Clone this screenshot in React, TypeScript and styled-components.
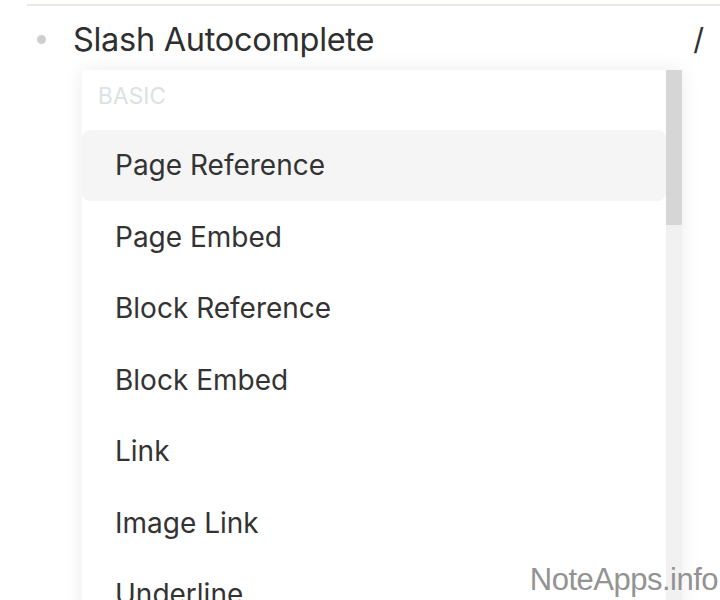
import React from "react";
import styled, { createGlobalStyle } from "styled-components";

const Global = createGlobalStyle`
  html, body { margin: 0; padding: 0; background: #ffffff; }
  body { width: 720px; height: 600px; overflow: hidden; font-family: Inter, "Noto Sans", sans-serif; }
`;

const Page = styled.div`
  position: relative;
  width: 720px;
  height: 600px;
  overflow: hidden;
  padding-top: 4px;
  box-sizing: border-box;
`;

const Divider = styled.div`
  margin-left: 27px;
  height: 2px;
  background: #e9e9e4;
`;

const BlockRow = styled.div`
  display: flex;
  align-items: center;
  height: 62px;
  padding-left: 37px;
  padding-right: 16px;
  margin-top: 2px;
`;

const Bullet = styled.span`
  width: 9px;
  height: 9px;
  border-radius: 50%;
  background: #cfcfcf;
  margin-right: 27px;
  flex: none;
`;

const Title = styled.span`
  font-size: 32.5px;
  color: #2f2f2f;
  letter-spacing: -0.3px;
  flex: 1;
`;

const Slash = styled.span`
  font-size: 30px;
  color: #2f2f2f;
`;

const Popup = styled.div`
  display: flex;
  margin-left: 82px;
  width: 600px;
  height: 560px;
  box-shadow: 0 0 18px rgba(0, 0, 0, 0.08);
  background: #ffffff;
`;

const List = styled.div`
  flex: 1;
  display: flex;
  flex-direction: column;
`;

const GroupLabel = styled.div`
  font-size: 22.5px;
  color: #dde1e6;
  padding: 12px 0 0 16px;
  height: 60px;
  box-sizing: border-box;
  letter-spacing: 0.2px;
`;

const Item = styled.div<{ $active?: boolean }>`
  height: 72px;
  display: flex;
  align-items: center;
  padding-left: 33px;
  font-size: 28px;
  color: #333333;
  border-radius: 8px;
  background: ${(p) => (p.$active ? "#f5f5f5" : "transparent")};
`;

const Track = styled.div`
  width: 16px;
  background: #f1f1f1;
  display: flex;
  flex-direction: column;
`;

const Thumb = styled.div`
  height: 155px;
  background: #d6d6d6;
`;

const Watermark = styled.div`
  position: absolute;
  right: 2px;
  bottom: 2px;
  font-family: "Liberation Sans", Arial, sans-serif;
  font-size: 31px;
  color: #939393;
  letter-spacing: -0.5px;
`;

const items = [
  "Page Reference",
  "Page Embed",
  "Block Reference",
  "Block Embed",
  "Link",
  "Image Link",
  "Underline",
];

export default function App() {
  return (
    <>
      <Global />
      <Page>
        <Divider />
        <BlockRow>
          <Bullet />
          <Title>Slash Autocomplete</Title>
          <Slash>/</Slash>
        </BlockRow>
        <Popup>
          <List>
            <GroupLabel>BASIC</GroupLabel>
            {items.map((t, i) => (
              <Item key={t} $active={i === 0}>
                {t}
              </Item>
            ))}
          </List>
          <Track>
            <Thumb />
          </Track>
        </Popup>
        <Watermark>NoteApps.info</Watermark>
      </Page>
    </>
  );
}
